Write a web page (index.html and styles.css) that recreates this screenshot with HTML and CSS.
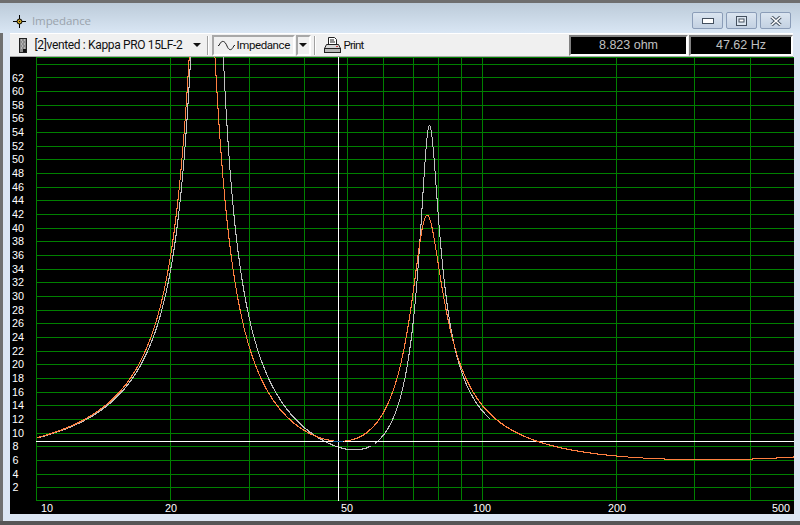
FILE: index.html
```html
<!DOCTYPE html>
<html lang="en">
<head>
    <meta charset="UTF-8">
    <title>Impedance</title>
    <link rel="stylesheet" href="styles.css">
</head>
<body>
    <div class="window">
        <div class="titlebar">
            <svg class="title-icon" width="13" height="13" viewBox="0 0 13 13">
                <path d="M0 6.5H4M9 6.5H13M6.5 0V4M6.5 9V13" stroke="#000" fill="none"/>
                <circle cx="6.5" cy="6.5" r="2.5" stroke="#000" fill="#c8a020"/>
                <rect x="6" y="6" width="1" height="1" fill="#000"/>
            </svg>
            <span class="title-text">Impedance</span>
            <div class="winbtns">
                <div class="winbtn">
                    <svg width="12" height="6" viewBox="0 0 12 6"><rect x="0.5" y="0.5" width="11" height="5" fill="#fff" stroke="#44505f"/></svg>
                </div>
                <div class="winbtn">
                    <svg width="11" height="10" viewBox="0 0 11 10"><rect x="0.5" y="0.5" width="10" height="9" fill="#dce6f0" stroke="#44505f"/><rect x="3" y="3" width="5" height="3" fill="#fff" stroke="#44505f" stroke-width="1"/></svg>
                </div>
                <div class="winbtn">
                    <svg width="12" height="10" viewBox="0 0 12 10"><path d="M1.5 1L10.5 9M10.5 1L1.5 9" stroke="#44505f" stroke-width="3.4"/><path d="M1.5 1L10.5 9M10.5 1L1.5 9" stroke="#fff" stroke-width="1.6"/></svg>
                </div>
            </div>
        </div>

        <div class="toolbar">
            <svg class="model-icon" width="8" height="15" viewBox="0 0 8 15">
                <rect x="0.5" y="0.5" width="7" height="14" fill="#8a8a8a" stroke="#222"/>
                <path d="M2 2H3M5 2H6M3 4H4M5 6H6M2 6H3M3 8H4M5 10H6M2 10H3" stroke="#ddd"/>
                <rect x="4" y="11" width="3" height="3" fill="#111"/>
            </svg>
            <span class="model-name">[2]vented : Kappa PRO 15LF-2</span>
            <span class="caret model-caret"></span>
            <span class="sep sep-first"></span>
            <div class="pressed">
                <svg width="17" height="11" viewBox="0 0 17 11">
                    <path d="M0 5.5H1C3 1 5 0.5 7 2.5C8 3.5 8.5 5 9 6C10.5 10 13 11 15 7.5L16 5.5H17" stroke="#222" fill="none"/>
                </svg>
                <span class="pressed-label">Impedance</span>
            </div>
            <div class="pressed pressed-arrow"><span class="caret"></span></div>
            <span class="sep sep-second"></span>
            <svg class="printer" width="17" height="17" viewBox="0 0 17 17">
                <path d="M4.5 0.5H10.5L12.5 2.5V7.5H4.5Z" fill="#fff" stroke="#222"/>
                <path d="M6 3H10M6 5H11" stroke="#222"/>
                <path d="M2.5 7.5H14.5L16.5 11.5H0.5Z" fill="#d8d8d8" stroke="#222"/>
                <rect x="0.5" y="11.5" width="16" height="4" fill="#b8b8b8" stroke="#222"/>
                <rect x="12" y="9" width="2" height="1" fill="#c04040"/>
            </svg>
            <span class="print-label">Print</span>
            <div class="readouts">
                <div class="readout readout-ohm">8.823 ohm</div>
                <div class="readout readout-hz">47.62 Hz</div>
            </div>
        </div>

        <svg class="chart" width="784" height="457" viewBox="10 57 784 457">
            <rect x="10" y="57" width="784" height="457" fill="#000"/>

            <g class="grid">
                <path d="M36 57.5H794M36 64.5H794M36 77.5H794M36 91.5H794M36 105.5H794M36 119.5H794M36 132.5H794M36 146.5H794M36 159.5H794M36 173.5H794M36 187.5H794M36 200.5H794M36 214.5H794M36 228.5H794M36 241.5H794M36 255.5H794M36 269.5H794M36 282.5H794M36 296.5H794M36 310.5H794M36 323.5H794M36 337.5H794M36 351.5H794M36 364.5H794M36 378.5H794M36 392.5H794M36 405.5H794M36 419.5H794M36 433.5H794M36 446.5H794M36 460.5H794M36 474.5H794M36 487.5H794M36 500.5H794"/>
                <path d="M36.5 57V501M170.5 57V501M249.5 57V501M304.5 57V501M347.5 57V501M383.5 57V501M413.5 57V501M438.5 57V501M461.5 57V501M482.5 57V501M616.5 57V501M694.5 57V501M750.5 57V501"/>
            </g>

            <g class="curve curve-gray" id="grayCurve"></g>

            <g class="crosshair">
                <path d="M36 441.5H794M338.5 57V501"/>
            </g>
            <path class="cross-mark" d="M333 441.5H343"/>

            <g class="curve curve-orange" id="orangeCurve"></g>

            <g class="labels">
                <text x="12" y="81.5" textLength="12" lengthAdjust="spacingAndGlyphs">62</text>
                <text x="12" y="95.16" textLength="12" lengthAdjust="spacingAndGlyphs">60</text>
                <text x="12" y="108.82" textLength="12" lengthAdjust="spacingAndGlyphs">58</text>
                <text x="12" y="122.48" textLength="12" lengthAdjust="spacingAndGlyphs">56</text>
                <text x="12" y="136.14" textLength="12" lengthAdjust="spacingAndGlyphs">54</text>
                <text x="12" y="149.8" textLength="12" lengthAdjust="spacingAndGlyphs">52</text>
                <text x="12" y="163.46" textLength="12" lengthAdjust="spacingAndGlyphs">50</text>
                <text x="12" y="177.12" textLength="12" lengthAdjust="spacingAndGlyphs">48</text>
                <text x="12" y="190.78" textLength="12" lengthAdjust="spacingAndGlyphs">46</text>
                <text x="12" y="204.44" textLength="12" lengthAdjust="spacingAndGlyphs">44</text>
                <text x="12" y="218.1" textLength="12" lengthAdjust="spacingAndGlyphs">42</text>
                <text x="12" y="231.76" textLength="12" lengthAdjust="spacingAndGlyphs">40</text>
                <text x="12" y="245.42" textLength="12" lengthAdjust="spacingAndGlyphs">38</text>
                <text x="12" y="259.08" textLength="12" lengthAdjust="spacingAndGlyphs">36</text>
                <text x="12" y="272.74" textLength="12" lengthAdjust="spacingAndGlyphs">34</text>
                <text x="12" y="286.4" textLength="12" lengthAdjust="spacingAndGlyphs">32</text>
                <text x="12" y="300.06" textLength="12" lengthAdjust="spacingAndGlyphs">30</text>
                <text x="12" y="313.72" textLength="12" lengthAdjust="spacingAndGlyphs">28</text>
                <text x="12" y="327.38" textLength="12" lengthAdjust="spacingAndGlyphs">26</text>
                <text x="12" y="341.04" textLength="12" lengthAdjust="spacingAndGlyphs">24</text>
                <text x="12" y="354.7" textLength="12" lengthAdjust="spacingAndGlyphs">22</text>
                <text x="12" y="368.36" textLength="12" lengthAdjust="spacingAndGlyphs">20</text>
                <text x="12" y="382.02" textLength="12" lengthAdjust="spacingAndGlyphs">18</text>
                <text x="12" y="395.68" textLength="12" lengthAdjust="spacingAndGlyphs">16</text>
                <text x="12" y="409.34" textLength="12" lengthAdjust="spacingAndGlyphs">14</text>
                <text x="12" y="423" textLength="12" lengthAdjust="spacingAndGlyphs">12</text>
                <text x="12" y="436.66" textLength="12" lengthAdjust="spacingAndGlyphs">10</text>
                <text x="12.5" y="450.32" textLength="6" lengthAdjust="spacingAndGlyphs">8</text>
                <text x="12.5" y="463.98" textLength="6" lengthAdjust="spacingAndGlyphs">6</text>
                <text x="12.5" y="477.64" textLength="6" lengthAdjust="spacingAndGlyphs">4</text>
                <text x="12.5" y="491.3" textLength="6" lengthAdjust="spacingAndGlyphs">2</text>

                <text x="41" y="512" textLength="12" lengthAdjust="spacingAndGlyphs">10</text>
                <text x="165" y="512" textLength="12" lengthAdjust="spacingAndGlyphs">20</text>
                <text x="341" y="512" textLength="12" lengthAdjust="spacingAndGlyphs">50</text>
                <text x="473" y="512" textLength="18" lengthAdjust="spacingAndGlyphs">100</text>
                <text x="608" y="512" textLength="18" lengthAdjust="spacingAndGlyphs">200</text>
                <text x="772" y="512" textLength="18" lengthAdjust="spacingAndGlyphs">500</text>
            </g>
        </svg>

        <div class="bottom-band"></div>
        <div class="bottom-edge"></div>
    </div>
    <script src="chart.js"></script>
</body>
</html>
```

FILE: styles.css
```css
html, body {
    margin: 0;
    padding: 0;
    background: #dce6f3;
}

body {
    width: 800px;
    height: 525px;
    overflow: hidden;
    font-family: "Liberation Sans", Arial, sans-serif;
}

.window {
    width: 800px;
    height: 525px;
    box-sizing: border-box;
    border-left: 3px solid #707070;
    background: #dce6f3;
    display: flex;
    flex-direction: column;
}

.titlebar {
    height: 33px;
    box-sizing: border-box;
    margin-left: -3px;
    border-top: 3px solid #6e6e6e;
    background: linear-gradient(to bottom, #bccbd9, #d9e6f4);
    display: flex;
    align-items: flex-start;
    padding-left: 13px;
}

.title-icon {
    margin-top: 12px;
}

.title-text {
    margin-left: 6px;
    margin-top: 10px;
    font-family: "Open Sans", sans-serif;
    font-size: 11.5px;
    letter-spacing: -0.1px;
    line-height: 16px;
    color: #9aa3ac;
}

.winbtns {
    margin-left: auto;
    margin-right: 9px;
    margin-top: 9px;
    display: flex;
    gap: 3px;
}

.winbtn {
    width: 31px;
    height: 17px;
    box-sizing: border-box;
    border: 1px solid #8b9db8;
    border-radius: 2px;
    background: linear-gradient(to bottom, #dbe5f0, #c3d1e2);
    display: flex;
    align-items: center;
    justify-content: center;
}

.toolbar {
    height: 24px;
    box-sizing: border-box;
    margin-left: 7px;
    margin-right: 7px;
    border-top: 1px solid #fff;
    border-bottom: 1px solid #a8a8a8;
    background: #f0f0f0;
    display: flex;
    align-items: center;
    font-family: Roboto, sans-serif;
    font-size: 12px;
    color: #111;
}

.model-icon {
    margin-left: 9px;
}

.model-name {
    margin-left: 7.5px;
    width: 158px;
    white-space: nowrap;
    letter-spacing: -0.35px;
}

.caret {
    display: block;
    width: 0;
    height: 0;
    border-left: 4px solid transparent;
    border-right: 4px solid transparent;
    border-top: 4px solid #111;
}

.sep {
    width: 1px;
    height: 19px;
    background: #a0a0a0;
    border-right: 1px solid #fff;
}

.sep-first {
    margin-left: 6px;
    margin-right: 3px;
}

.sep-second {
    margin-left: 3px;
}

.pressed {
    width: 83px;
    height: 21px;
    box-sizing: border-box;
    border: 2px solid #fff;
    border-top-color: #a8a8a8;
    border-left-color: #a8a8a8;
    display: flex;
    align-items: center;
    padding-left: 4px;
}

.pressed-label {
    margin-left: 2px;
    font-size: 11.5px;
    letter-spacing: -0.4px;
}

.pressed-arrow {
    width: 15px;
    margin-left: 1px;
    padding-left: 1px;
}

.printer {
    margin-left: 8px;
}

.print-label {
    margin-left: 3px;
    font-size: 11.5px;
    letter-spacing: -0.8px;
}

.readouts {
    margin-left: auto;
    display: flex;
    gap: 1px;
}

.readout {
    height: 21px;
    box-sizing: border-box;
    border: 2px solid #fff;
    border-top-color: #808080;
    border-left-color: #808080;
    background: #000;
    color: #c0c0c0;
    font-family: "Liberation Sans", Arial, sans-serif;
    font-size: 12.5px;
    line-height: 17px;
    text-align: center;
}

.readout-ohm {
    width: 119px;
}

.readout-hz {
    width: 104px;
}

.chart {
    display: block;
    margin-left: 7px;
}

.grid path {
    stroke: #008000;
    stroke-width: 1;
    fill: none;
    shape-rendering: crispEdges;
}

.curve polyline {
    fill: none;
    stroke-width: 1;
    shape-rendering: crispEdges;
}

.curve-gray polyline {
    stroke: #c0c0c0;
}

.curve-orange polyline {
    stroke: #ff7f40;
}

.crosshair path {
    stroke: #fff;
    stroke-width: 1;
    shape-rendering: crispEdges;
}

.cross-mark {
    stroke: #2a78b8;
    stroke-width: 1;
    shape-rendering: crispEdges;
}

.labels text {
    fill: #fff;
    font-family: "Liberation Sans", Arial, sans-serif;
    font-size: 11.8px;
}

.bottom-band {
    height: 7px;
}

.bottom-edge {
    height: 4px;
    margin-left: -3px;
    background: #565656;
}
```

FILE: chart.js
```js
// impedance curves: two resonances in series with Re and the voice coil inductance
const orange = { re: 5.9, bump: 1.05, res: [[23.5, 86, 7.6], [74.5, 35, 6.2]] };
const gray = { re: 5.9, bump: 0.3, res: [[24.1, 125, 10.4], [75.6, 48.5, 10]] };

function impedance(f, c) {
    let real = c.re;
    let imag = 2 * Math.PI * f * 0.0012;
    for (const [f0, r, q] of c.res) {
        const a = q * (f / f0 - f0 / f);
        real += r / (1 + a * a);
        imag -= r * a / (1 + a * a);
    }
    const d = Math.log10(f / 48);
    real += c.bump * Math.exp(-d * d / 0.045);
    return Math.hypot(real, imag);
}

// x pixels per decade is 446, starting from 10 Hz at x = 36.5
function trace(c, from, to) {
    const pts = [];
    for (let x = from; x <= to; x += 0.25) {
        const f = 10 * Math.pow(10, (x - 36.5) / 446);
        const y = 500 - 6.83 * impedance(f, c);
        pts.push((Math.round(x) + 0.5) + "," + (Math.round(y) + 0.5));
    }
    return pts.join(" ");
}

function addLine(id, c, from, to) {
    const line = document.createElementNS("http://www.w3.org/2000/svg", "polyline");
    line.setAttribute("points", trace(c, from, to));
    document.getElementById(id).appendChild(line);
}

addLine("grayCurve", gray, 36, 192);
addLine("grayCurve", gray, 221.5, 370);
addLine("grayCurve", gray, 374, 490);

addLine("orangeCurve", orange, 36, 333);
addLine("orangeCurve", orange, 343, 794);
```
